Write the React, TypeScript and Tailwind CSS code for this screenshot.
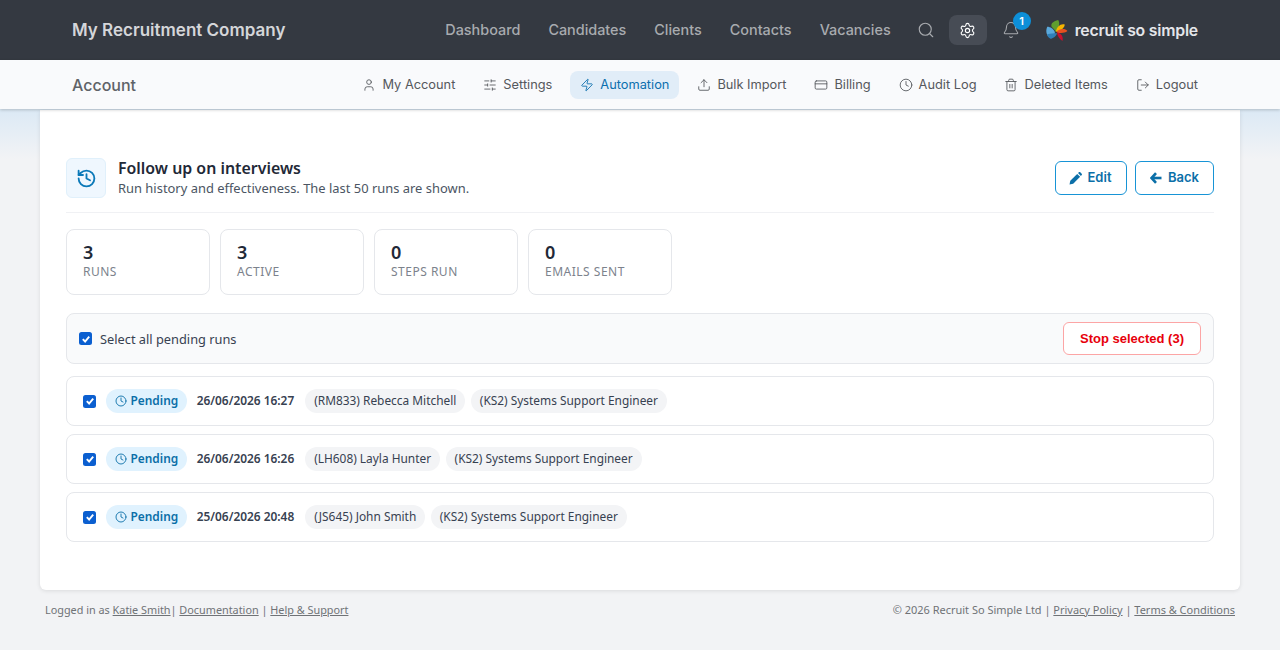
import React from 'react';
import {
  Search, Settings, Bell, User, SlidersHorizontal, Zap, Upload, CreditCard, Clock, Trash2, LogOut, History,
} from 'lucide-react';

const mainNav = ['Dashboard', 'Candidates', 'Clients', 'Contacts', 'Vacancies'];

const subNav = [
  { label: 'My Account', icon: User },
  { label: 'Settings', icon: SlidersHorizontal },
  { label: 'Automation', icon: Zap, active: true },
  { label: 'Bulk Import', icon: Upload },
  { label: 'Billing', icon: CreditCard },
  { label: 'Audit Log', icon: Clock },
  { label: 'Deleted Items', icon: Trash2 },
  { label: 'Logout', icon: LogOut },
];

const stats = [
  { value: '3', label: 'RUNS' },
  { value: '3', label: 'ACTIVE' },
  { value: '0', label: 'STEPS RUN' },
  { value: '0', label: 'EMAILS SENT' },
];

const runs = [
  { date: '26/06/2026 16:27', candidate: '(RM833) Rebecca Mitchell', vacancy: '(KS2) Systems Support Engineer' },
  { date: '26/06/2026 16:26', candidate: '(LH608) Layla Hunter', vacancy: '(KS2) Systems Support Engineer' },
  { date: '25/06/2026 20:48', candidate: '(JS645) John Smith', vacancy: '(KS2) Systems Support Engineer' },
];

// pinwheel logo, petals drawn by eye
const Logo = () => (
  <svg width="23" height="21" viewBox="0 0 21 19" className="shrink-0">
    <path d="M2 6 C5 6 8 8 9 11 C9 14 7 16 5 16 C2 15 0 11 2 6Z" fill="#5aa9dc" />
    <path d="M2 13 C5 12 8 12 11 12 C10 15 7 17 5 17 C3 16 2 15 2 13Z" fill="#2f7fb8" />
    <path d="M6 6 C5 3 8 1 12 0 C14 3 13 7 10 11 C9 9 7 7 6 6Z" fill="#5f9e2f" />
    <path d="M10 10 C11 6 14 3 18 4 C18 7 14 10 11 11Z" fill="#f5b400" />
    <path d="M11 10 C14 8 18 7 20.5 10 C18 12 15 12 11 11.5Z" fill="#e8501f" />
    <path d="M11 11 C14 12 17 14 16 19 C13 17 11 14 11 11Z" fill="#c8102e" />
  </svg>
);

const Check = ({ className }: { className: string }) => (
  <span className={`flex h-[13px] w-[13px] shrink-0 items-center justify-center rounded-[2.5px] bg-[#0b5fd0] ${className}`}>
    <svg width="10" height="10" viewBox="0 0 10 10" fill="none">
      <path d="M1.8 5.2 L4.1 7.5 L8.2 2.6" stroke="#fff" strokeWidth="1.9" />
    </svg>
  </span>
);

const SolidPencil = () => (
  <svg width="13" height="13" viewBox="0 0 13 13" fill="currentColor">
    <path d="M0.5 12.5 L1.3 8.8 L8.2 1.9 L11.1 4.8 L4.2 11.7Z" />
    <path d="M9 1.1 L9.9 0.3 C10.3 -0.1 10.9 -0.1 11.3 0.3 L12.7 1.7 C13.1 2.1 13.1 2.7 12.7 3.1 L11.9 4Z" />
  </svg>
);

const SolidArrow = () => (
  <svg width="12" height="12" viewBox="0 0 12 12" fill="none" stroke="currentColor" strokeWidth="2.6">
    <path d="M6 1.2 L1.6 6 L6 10.8" />
    <path d="M2 6 L11.5 6" />
  </svg>
);

export default function App() {
  return (
    <div className="flex min-h-[650px] flex-col bg-[#f2f3f5] font-['Noto_Sans',sans-serif]">
      <header className="flex h-[60px] items-center bg-[#343941] pl-[72px] pr-[82px] font-['Inter',sans-serif]">
        <span className="pt-[1px] text-[17px] font-semibold text-[#d4d6d9]">My Recruitment Company</span>
        <nav className="ml-auto flex items-center gap-[28px]">
          {mainNav.map((item) => (
            <span key={item} className="text-[14.4px] font-medium text-[#a8abaf]">{item}</span>
          ))}
        </nav>
        <Search className="ml-[26px] text-[#a8abaf]" size={18} strokeWidth={1.5} />
        <span className="ml-[14px] flex h-[30px] w-[38px] items-center justify-center rounded-lg bg-[#474c55]">
          <Settings className="text-white" size={17} strokeWidth={1.6} />
        </span>
        <span className="relative ml-[15px] flex">
          <Bell className="text-[#a8abaf]" size={18} strokeWidth={1.4} />
          <span className="absolute -top-[9px] left-[11px] flex h-[18px] w-[18px] items-center justify-center rounded-full bg-[#0d8fd8] text-[11px] font-semibold text-white">1</span>
        </span>
        <span className="ml-[25px] flex items-center gap-[7px]">
          <Logo />
          <span className="pt-[1px] text-[15.8px] font-semibold tracking-[-0.2px] text-[#e4e6ea]">recruit so simple</span>
        </span>
      </header>

      <div className="relative z-10 flex h-[49px] items-center bg-[#f9fafc] pl-[72px] pr-[72px] font-['Inter',sans-serif] shadow-[0_1px_3px_rgba(0,0,0,0.2)]">
        <span className="text-base font-medium text-[#5f6368]">Account</span>
        <nav className="ml-auto flex items-center gap-[8px]">
          {subNav.map(({ label, icon: Icon, active }) => (
            <span
              key={label}
              className={active
                ? 'flex h-[28px] items-center gap-[6px] rounded-lg bg-[#e1edf8] px-[10px] text-[12.8px] text-[#0b6fae]'
                : 'flex h-[28px] items-center gap-[6px] px-[10px] text-[12.8px] text-[#55585d]'}
            >
              <Icon size={14} strokeWidth={1.5} />
              {label}
            </span>
          ))}
        </nav>
      </div>

      <div className="bg-[linear-gradient(#dbe9f5,#f2f3f5_50px)] px-[40px] pt-[1px]">
        <main className="h-[480px] rounded-b-md bg-white px-[26px] pt-[48px] shadow-[0_1px_4px_rgba(0,0,0,0.1)]">
          <div className="flex h-[55px] border-b border-[#f0f1f4]">
            <span className="flex h-[40px] w-[40px] items-center justify-center rounded-md border border-[#e0f0fb] bg-[#eff7fe]">
              <History className="text-[#0b79b8]" size={21} strokeWidth={2.1} />
            </span>
            <div className="ml-[12px]">
              <h1 className="text-[15.9px] leading-[21px] font-semibold text-[#1f2937]">Follow up on interviews</h1>
              <p className="text-[12.93px] leading-[18px] text-[#4b5563]">Run history and effectiveness. The last 50 runs are shown.</p>
            </div>
            <div className="ml-auto flex gap-[8px] pt-[3px] font-['Inter',sans-serif]">
              <button className="flex h-[34px] w-[72px] items-center justify-center gap-[6px] rounded-md border border-[#1794d6] pr-[2px] text-[13px] font-semibold text-[#0b6fa8]">
                <SolidPencil />
                Edit
              </button>
              <button className="flex h-[34px] w-[79px] items-center justify-center gap-[6px] rounded-md border border-[#1794d6] text-[13px] font-semibold text-[#0b6fa8]">
                <SolidArrow />
                Back
              </button>
            </div>
          </div>

          <div className="mt-[16px] flex gap-[10px]">
            {stats.map((s) => (
              <div key={s.label} className="h-[66px] w-[144px] rounded-lg border border-[#e5e7eb] px-[16px] pt-[10px]">
                <div className="text-lg leading-[25px] font-semibold text-[#1f2937]">{s.value}</div>
                <div className="text-xs leading-[14px] tracking-[0.5px] text-[#7c828c]">{s.label}</div>
              </div>
            ))}
          </div>

          <div className="mt-[18px] flex h-[51px] items-center rounded-lg border border-[#e5e7eb] bg-[#f9fafb] pl-[12px] pr-[12px]">
            <Check className="mr-[8px]" />
            <span className="pt-[2px] text-[12.8px] text-[#374151]">Select all pending runs</span>
            <button className="ml-auto h-[33px] w-[138px] rounded-md border border-[#fca5a5] bg-white font-['Liberation_Sans',sans-serif] text-[13px] font-bold text-[#e7000b]">
              Stop selected (3)
            </button>
          </div>

          <div className="mt-[12px] flex flex-col gap-[8px]">
            {runs.map((r) => (
              <div key={r.date} className="flex h-[50px] items-center rounded-lg border border-[#e5e7eb] pl-[16px] text-[11.9px]">
                <Check className="mr-[10px]" />
                <span className="flex h-[24px] items-center gap-[4px] rounded-full bg-[#e0f2fe] px-[8.5px] font-semibold text-[#0b6fa8]">
                  <Clock size={12} strokeWidth={1.8} />
                  Pending
                </span>
                <span className="ml-[10px] font-semibold text-[#374151]">{r.date}</span>
                <span className="ml-[11px] flex h-[24px] items-center rounded-full bg-[#f3f4f6] px-[9px] text-[#374151]">{r.candidate}</span>
                <span className="ml-[5.5px] flex h-[24px] items-center rounded-full bg-[#f3f4f6] px-[9px] text-[#374151]">{r.vacancy}</span>
              </div>
            ))}
          </div>
        </main>
      </div>

      <footer className="flex justify-between px-[45px] pt-[12px] leading-[16px] text-[#6f7276]">
        <span className="text-[10.85px]">
          Logged in as <a className="underline">Katie Smith</a>| <a className="underline">Documentation</a> | <a className="underline">Help &amp; Support</a>
        </span>
        <span className="text-[10.97px]">
          © 2026 Recruit So Simple Ltd | <a className="underline">Privacy Policy</a> | <a className="underline">Terms &amp; Conditions</a>
        </span>
      </footer>
    </div>
  );
}
